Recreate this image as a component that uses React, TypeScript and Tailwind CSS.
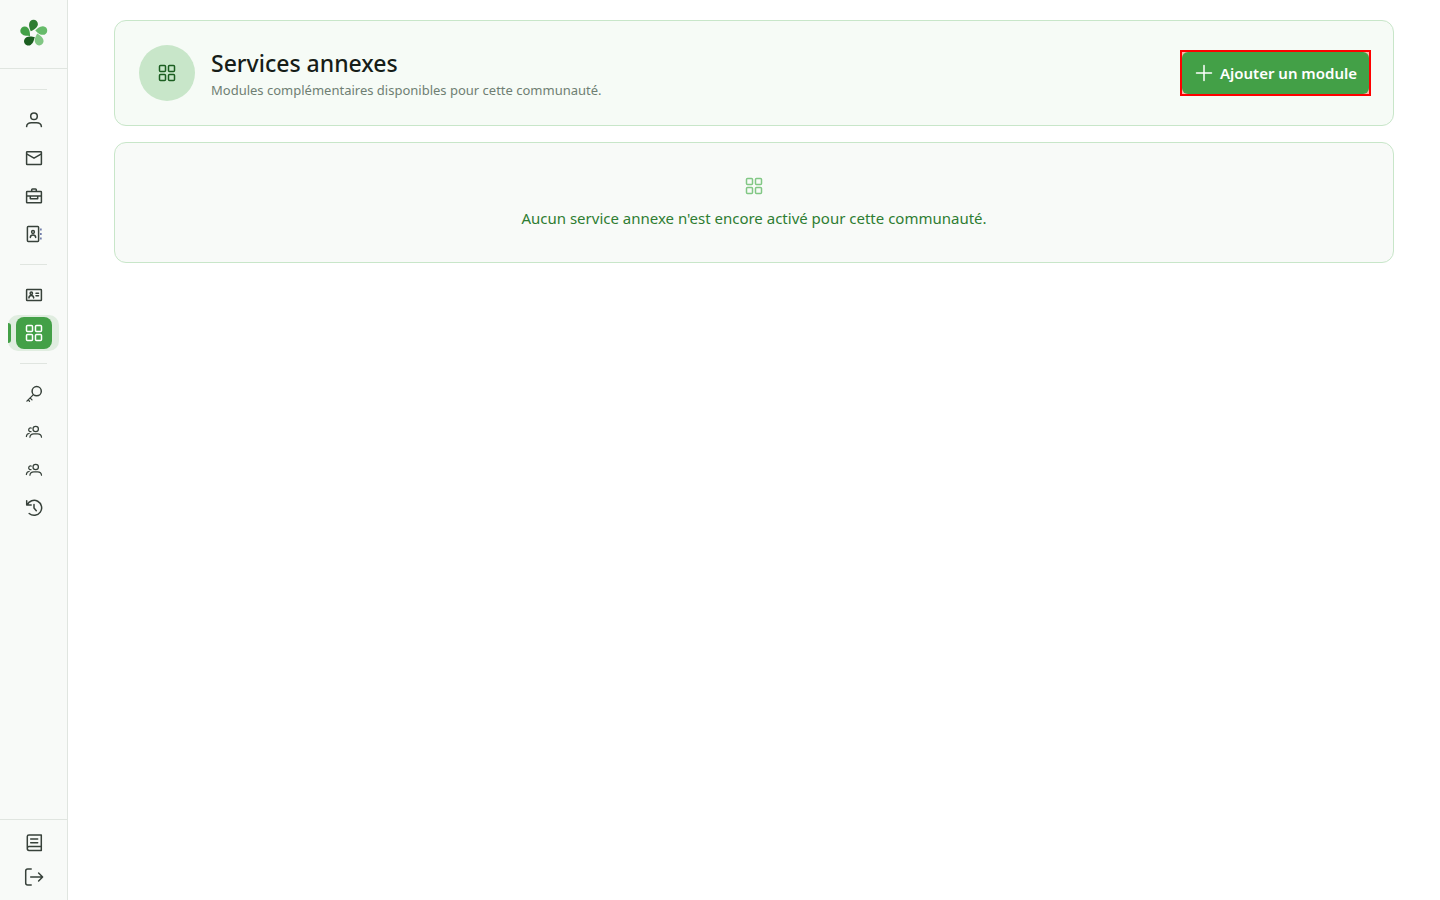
import type { ReactNode } from "react";

function Icon({ children }: { children: ReactNode }) {
  return (
    <svg
      viewBox="0 0 20 20"
      className="size-5 shrink-0"
      fill="none"
      stroke="currentColor"
      strokeWidth="1.5"
      strokeLinecap="round"
      strokeLinejoin="round"
      aria-hidden="true"
    >
      {children}
    </svg>
  );
}

const GridIcon = () => (
  <Icon>
    <rect x="2.500" y="2.500" width="6" height="6" rx="1" />
    <rect x="11.500" y="2.500" width="6" height="6" rx="1" />
    <rect x="2.500" y="11.500" width="6" height="6" rx="1" />
    <rect x="11.500" y="11.500" width="6" height="6" rx="1" />
  </Icon>
);

const UserIcon = () => (
  <Icon>
    <circle cx="10" cy="6.2" r="3.3" />
    <path d="M2.6 16.600c.2-2.600 2-3.900 4.800-3.900h5.200c2.800 0 4.600 1.300 4.800 3.900" />
  </Icon>
);

const MailIcon = () => (
  <Icon>
    <rect x="2.600" y="3.700" width="14.800" height="12.900" rx=".6" />
    <path d="M3 6.200l7 4 7-4" />
  </Icon>
);

const BriefcaseIcon = () => (
  <Icon>
    <rect x="2.600" y="5.600" width="14.800" height="11.200" rx=".6" />
    <path d="M7.700 5.300V3.700q0-.8.8-.8h3q.8 0 .8.8v1.600M3 10h14M6.300 10.300v2.500h7.400v-2.500" />
  </Icon>
);

const ContactsIcon = () => (
  <Icon>
    <rect x="3.400" y="2.600" width="11.200" height="14.800" rx=".8" />
    <circle cx="9" cy="8" r="1.400" />
    <path d="M6.300 13.400c.1-1.600 1-2.300 2.700-2.300s2.600.7 2.700 2.300" />
    <path d="M16.900 4.500v2M16.900 9v2M16.900 13.500v2" stroke="#3a4a8c" strokeWidth="1.200" strokeLinecap="butt" />
  </Icon>
);

const IdCardIcon = () => (
  <Icon>
    <rect x="2.600" y="4.600" width="14.800" height="10.900" rx=".6" />
    <circle cx="7.300" cy="8.200" r="1.200" />
    <path d="M4.900 12.900c.1-1.500.9-2.300 2.400-2.300s2.300.8 2.400 2.300M12 8.300h2.500M12 10.800h2.500" />
  </Icon>
);

const KeyIcon = () => (
  <Icon>
    <circle cx="12.700" cy="7.200" r="4.600" />
    <path d="M9.400 10.600l-6.500 6.500M6 13.900l2 2M4.200 15.900l1.300 1.300" strokeWidth="1.300" />
  </Icon>
);

const UsersIcon = () => (
  <Icon>
    <g strokeWidth="1.250">
      <circle cx="11.700" cy="7" r="2.700" />
      <path d="M5.900 15.200c.2-2.300 1.600-3.400 4-3.400h3.700c2.400 0 3.700 1.100 3.900 3.400" />
      <path d="M7.200 6c-1.400-.3-2.500.6-2.500 1.900 0 1.200 1 2 2.300 1.800M2.400 14.500c.1-1.700.9-2.800 2.700-3" />
    </g>
  </Icon>
);

const HistoryIcon = () => (
  <Icon>
    <path d="M2.700 2.700v4.300h4.500M3.200 7A7.500 7.500 0 1 1 5.200 15.500M10 6.400V10l2.300 2.700" />
  </Icon>
);

const BookIcon = () => (
  <Icon>
    <path d="M17.300 13.600H5q-1.700 0-1.700 1.900t1.700 1.900h12.300V1.900H4.900q-1.600 0-1.600 1.600v12M6.700 6h7M6.700 9.700h7" />
  </Icon>
);

const LogoutIcon = () => (
  <Icon>
    <path d="M7.200 1.900H3.700q-2 0-2 2v12.200q0 2 2 2h3.500M6.700 10h11.800M14.600 6l4 4-4 4" />
  </Icon>
);

const PlusIcon = () => (
  <Icon>
    <path d="M10 2.500v15M2.500 10h15" />
  </Icon>
);

const petal = "M0 0C-1.400-1.600-4.500-4.300-4.500-7.700A4.350 4.350 0 0 1 4.200-7.700C4.200-4.300 1.400-1.600 0 0Z";

function Logo() {
  return (
    <svg viewBox="0 0 32 32" className="size-8" aria-hidden="true">
      <path d={petal} fill="#2e7d32" transform="translate(12.800 13.300) rotate(22)" />
      <path d={petal} fill="#66bb6a" transform="translate(17.200 12.400) rotate(92)" />
      <path d={petal} fill="#81c784" transform="translate(19.200 15.600) rotate(166)" />
      <path d={petal} fill="#1b5e20" transform="translate(16.800 19) rotate(238)" />
      <path d={petal} fill="#43a047" transform="translate(12.100 18.200) rotate(316)" />
    </svg>
  );
}

type Item = { label: string; icon: ReactNode; active?: boolean };

const groups: Item[][] = [
  [
    { label: "Profil", icon: <UserIcon /> },
    { label: "Messages", icon: <MailIcon /> },
    { label: "Organisation", icon: <BriefcaseIcon /> },
    { label: "Contacts", icon: <ContactsIcon /> },
  ],
  [
    { label: "Identité", icon: <IdCardIcon /> },
    { label: "Services annexes", icon: <GridIcon />, active: true },
  ],
  [
    { label: "Accès", icon: <KeyIcon /> },
    { label: "Membres", icon: <UsersIcon /> },
    { label: "Groupes", icon: <UsersIcon /> },
    { label: "Historique", icon: <HistoryIcon /> },
  ],
];

function NavItem({ label, icon, active }: Item) {
  return active ? (
    <a
      href="#"
      aria-label={label}
      aria-current="page"
      className="relative flex h-9 items-center justify-center rounded-[10px] bg-[#e0ede0] text-white"
    >
      <span className="absolute left-0 h-5 w-[3px] rounded-r-sm bg-[#43a047]" />
      <span className="flex h-8 w-9 items-center justify-center rounded-lg bg-[#43a047]">{icon}</span>
    </a>
  ) : (
    <a href="#" aria-label={label} className="flex h-9 items-center justify-center rounded-[10px]">
      {icon}
    </a>
  );
}

export default function App() {
  return (
    <div className="flex min-h-screen bg-white font-['Segoe_UI','Noto_Sans',sans-serif] text-[#37413a]">
      <aside className="flex w-[68px] shrink-0 flex-col border-r border-[#e0e5e0] bg-[#f8faf8]">
        <a href="#" aria-label="Accueil" className="flex h-[69px] items-center justify-center border-b border-[#e0e5e0]">
          <Logo />
        </a>
        <nav className="flex flex-1 flex-col px-2 pt-2">
          {groups.map((group, i) => (
            <div key={i} className="flex flex-col">
              <hr className="mx-3 my-3 border-[#e0e5e0]" />
              <div className="flex flex-col gap-0.5">
                {group.map((item) => (
                  <NavItem key={item.label} {...item} />
                ))}
              </div>
            </div>
          ))}
        </nav>
        <div className="flex flex-col gap-0.5 border-t border-[#e0e5e0] px-2 py-[7px]">
          <a href="#" aria-label="Documentation" className="flex h-8 items-center justify-center">
            <BookIcon />
          </a>
          <button type="button" aria-label="Déconnexion" className="flex h-8 items-center justify-center">
            <LogoutIcon />
          </button>
        </div>
      </aside>

      <main className="min-w-0 flex-1 px-6 py-5">
        <div className="mx-auto flex max-w-[1280px] flex-col gap-4">
          <header className="flex items-center gap-4 rounded-xl border border-[#c8e6c9] bg-[#f6fbf6] p-6">
            <div className="flex size-14 shrink-0 items-center justify-center rounded-full bg-[#c8e6c9] text-[#1b5e20]">
              <GridIcon />
            </div>
            <div className="flex-1">
              <h1 className="text-[23px] leading-[34px] font-medium text-[#161d18]">Services annexes</h1>
              <p className="text-[13px] leading-5 text-[#6f7f73]">
                Modules complémentaires disponibles pour cette communauté.
              </p>
            </div>
            <div className="bg-[#fbb9ac] outline-2 outline-[#ff0000]">
              <button
                type="button"
                className="flex h-[42px] items-center gap-1.5 rounded-md bg-[#43a047] px-3 text-[15px] font-semibold whitespace-nowrap text-white"
              >
                <PlusIcon />
                Ajouter un module
              </button>
            </div>
          </header>

          <section className="flex flex-col items-center gap-2.5 rounded-xl border border-[#c8e6c9] bg-[#f8faf8] px-6 pt-[33px] pb-8">
            <span className="text-[#81c784]">
              <GridIcon />
            </span>
            <p className="text-[15px] leading-6 text-[#2e7d32]">
              Aucun service annexe n'est encore activé pour cette communauté.
            </p>
          </section>
        </div>
      </main>
    </div>
  );
}
